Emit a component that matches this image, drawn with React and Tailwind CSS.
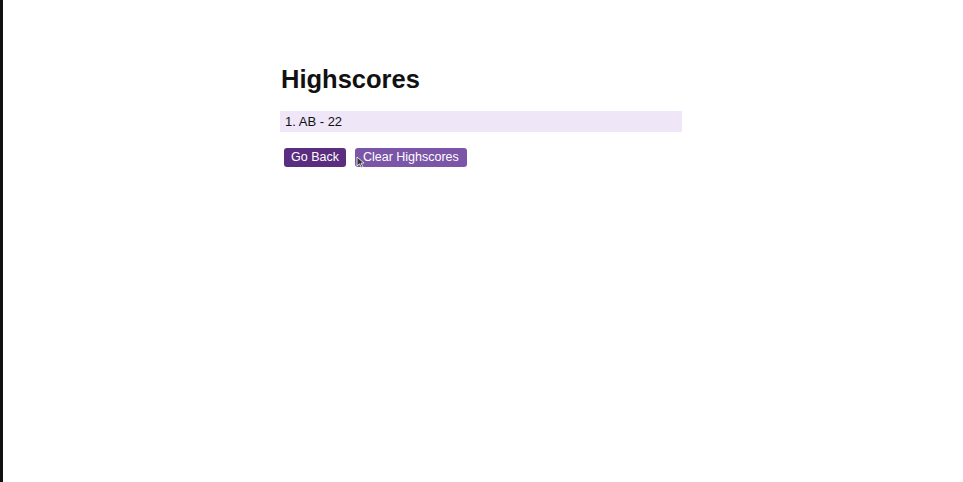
export default function App() {
  return (
    <div className="flex h-[482px] w-[963px] bg-white" style={{ fontFamily: '"Liberation Sans", Arial, sans-serif' }}>
      <div className="w-[3px] bg-[#111]" />
      <div className="flex-1 pl-[277px] pt-[63px]">
        <div className="w-[402px]">
          <h1 className="pl-[1px] text-[25.5px] font-bold leading-[32px] text-[#111]">Highscores</h1>
          <div className="mt-[16px] h-[21px] bg-[#efe6f8] pl-[5px] text-[13px] leading-[21px] text-[#111]">1. AB - 22</div>
          <div className="mt-[16px] flex gap-[9px] pl-[4px]">
            <button className="h-[19px] rounded-[3px] bg-[#5a2d80] px-[7px] text-[12.5px] leading-[19px] text-white">Go Back</button>
            <button className="relative h-[19px] rounded-[3px] bg-[#7b55a8] px-[8px] text-[12.5px] leading-[19px] text-white">
              Clear Highscores
              <svg className="absolute left-[1px] top-[8px]" width="9" height="12" viewBox="0 0 9 12">
                <path d="M1 1 L1 10 L3.5 7.8 L5.5 11.5 L7 10.8 L5 7.2 L8 7 Z" fill="#333" stroke="#fff" strokeWidth="0.8" />
              </svg>
            </button>
          </div>
        </div>
      </div>
    </div>
  );
}
